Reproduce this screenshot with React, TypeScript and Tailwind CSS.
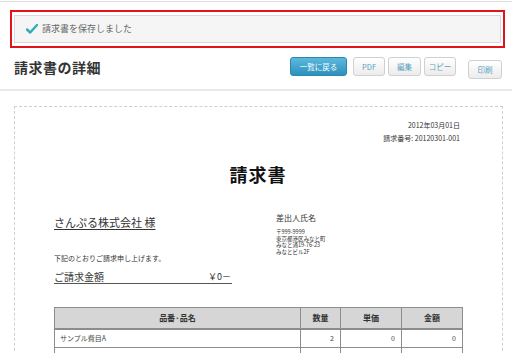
import React from 'react';

const jp = { fontFamily: '"Noto Sans CJK JP", "Noto Sans", sans-serif' };

const Check = () => (
  <svg width="12" height="10" viewBox="0 0 12 10" className="shrink-0">
    <path d="M1 5.5 L4.2 8.5 L11 1" fill="none" stroke="#35a9bd" strokeWidth="2.4" strokeLinecap="round" strokeLinejoin="round" />
  </svg>
);

const GhostButton: React.FC<{ label: string; w: string }> = ({ label, w }) => (
  <button
    className={`${w} h-[19px] rounded-[3px] border border-[#d0d0d0] bg-linear-to-b from-white to-[#ececec] text-[7.5px] text-[#5b9fc2] leading-none`}
  >
    {label}
  </button>
);

export default function App() {
  return (
    <div className="w-[512px] h-[353px] overflow-hidden bg-white text-[#333]" style={jp}>
      {/* top rule */}
      <div className="mt-[1px] h-[1px] bg-[#dedede]" />

      {/* saved notice, highlighted */}
      <div className="mt-[8px] ml-[10px] w-[495px] border-2 border-[#e3131c] px-[2px] py-[3px]">
        <div className="h-[28px] flex items-center gap-[4px] pl-[11px] border border-[#d9d9d9] bg-[#f5f5f5]">
          <Check />
          <span className="text-[9px] text-[#666]">請求書を保存しました</span>
        </div>
      </div>

      {/* heading + actions */}
      <div className="mt-[9px] h-[19px] flex items-center justify-between pl-[14px] pr-[10px]">
        <h1 className="text-[14px] font-bold text-[#333] leading-none tracking-[0.5px]">請求書の詳細</h1>
        <div className="flex items-center">
          <button className="w-[57px] h-[19px] rounded-[3px] border border-[#2a86ad] bg-linear-to-b from-[#5cb9dd] to-[#2c91bd] text-[7.5px] text-white leading-none">
            一覧に戻る
          </button>
          <div className="ml-[6px] flex gap-[3px]">
            <GhostButton label="PDF" w="w-[32px]" />
            <GhostButton label="編集" w="w-[33px]" />
            <GhostButton label="コピー" w="w-[32px]" />
          </div>
          <div className="ml-[12px]">
            <GhostButton label="印刷" w="w-[34px]" />
          </div>
        </div>
      </div>

      <div className="mt-[13px] h-[2px] bg-[#e8e8e8]" />

      {/* invoice document */}
      <div className="mt-[15px] ml-[14px] w-[489px] h-[260px] border border-dashed border-[#cfcfcf] pl-[39px] pr-[40px] pt-[12px]">
        <div className="text-right mr-[2px] text-[7px] leading-[13px] text-[#333]">
          <div>2012年03月01日</div>
          <div>請求番号: 20120301-001</div>
        </div>

        <div className="mt-[17px] text-center text-[18px] font-bold leading-[24px] text-[#111] tracking-[1px]">請求書</div>

        <div className="mt-[26px] flex">
          <div className="w-[222px]">
            <div className="mt-[2px] text-[11px] leading-[16px] underline underline-offset-2 text-[#333]">さんぷる株式会社 様</div>
            <div className="mt-[23px] text-[7px] leading-[10px]">下記のとおりご請求申し上げます。</div>
            <div className="mt-[7px] w-[178px] h-[14px] flex justify-between items-center border-b border-[#555] text-[10px] leading-none">
              <span>ご請求金額</span>
              <span className="text-[9px] mr-[1px]">￥0－</span>
            </div>
          </div>
          <div className="pt-[1px]">
            <div className="text-[8px] leading-[10px]">差出人氏名</div>
            <div className="mt-[6px] text-[5.5px] leading-[6.5px]">
              <div>〒999-9999</div>
              <div>東京都港区みなと町</div>
              <div>みなと通19-76-23</div>
              <div>みなとビル2F</div>
            </div>
          </div>
        </div>

        <table className="mt-[23px] w-[408px] border-collapse table-fixed">
          <colgroup>
            <col className="w-[246px]" />
            <col className="w-[40px]" />
            <col className="w-[61px]" />
            <col className="w-[61px]" />
          </colgroup>
          <thead>
            <tr className="h-[21px] bg-[#d6d6d6] text-[8px] font-bold">
              <th className="border border-[#8c8c8c] border-b-2">品番·品名</th>
              <th className="border border-[#8c8c8c] border-b-2">数量</th>
              <th className="border border-[#8c8c8c] border-b-2">単価</th>
              <th className="border border-[#8c8c8c] border-b-2">金額</th>
            </tr>
          </thead>
          <tbody className="text-[7px] text-[#444]">
            <tr className="h-[19px]">
              <td className="border border-[#8c8c8c] pl-[5px]">サンプル費目A</td>
              <td className="border border-[#8c8c8c] text-right pr-[6px]">2</td>
              <td className="border border-[#8c8c8c] text-right pr-[6px]">0</td>
              <td className="border border-[#8c8c8c] text-right pr-[6px]">0</td>
            </tr>
            <tr className="h-[19px]">
              <td className="border border-[#8c8c8c]" />
              <td className="border border-[#8c8c8c]" />
              <td className="border border-[#8c8c8c]" />
              <td className="border border-[#8c8c8c]" />
            </tr>
          </tbody>
        </table>
      </div>
    </div>
  );
}
